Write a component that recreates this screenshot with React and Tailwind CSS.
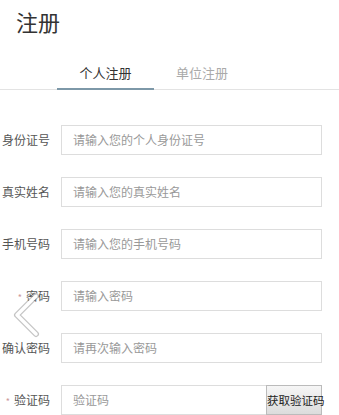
const fields = [
  { label: "身份证号", placeholder: "请输入您的个人身份证号" },
  { label: "真实姓名", placeholder: "请输入您的真实姓名" },
  { label: "手机号码", placeholder: "请输入您的手机号码" },
  { label: "密码", placeholder: "请输入密码", required: true },
  { label: "确认密码", placeholder: "请再次输入密码" },
  { label: "验证码", placeholder: "验证码", required: true, code: true },
];

export default function App() {
  return (
    <div
      className="relative w-[339px] h-[415px] overflow-hidden bg-white text-[#333]"
      style={{ fontFamily: '"Noto Sans CJK SC", "Noto Sans", sans-serif' }}
    >
      <h1 className="pl-[16px] pt-[6px] text-[22px] leading-[30px] font-normal">注册</h1>

      <div className="mt-[21px] flex border-b border-[#e3e3e3] h-[33px]">
        <div className="ml-[57px] w-[97px] flex justify-center border-b-2 border-[#7d98a8] -mb-px text-[13px] leading-[32px] text-[#333]">
          个人注册
        </div>
        <div className="ml-[22px] text-[13px] leading-[32px] text-[#aaa]">单位注册</div>
      </div>

      <div className="mt-[35px] flex flex-col gap-[22px]">
        {fields.map((f) => (
          <div key={f.label} className="flex items-center h-[30px]">
            <div className="w-[50px] text-right text-[12px] text-[#555] whitespace-nowrap">
              {f.required && <span className="text-[#c99] text-[9px] mr-[4px] align-middle">*</span>}
              {f.label}
            </div>
            <div className="ml-[11px] w-[261px] h-[30px] flex border border-[#ddd]">
              <div className="flex-1 pl-[11px] text-[12px] leading-[28px] text-[#999]">{f.placeholder}</div>
              {f.code && (
                <button className="w-[56px] -my-px -mr-px border border-[#bbb] bg-gradient-to-b from-[#f6f6f6] to-[#dcdcdc] text-[11.5px] text-[#222] leading-[28px] whitespace-nowrap">
                  获取验证码
                </button>
              )}
            </div>
          </div>
        ))}
      </div>

      <svg className="absolute left-[10px] top-[291px]" width="32" height="48" viewBox="0 0 32 48">
        <path d="M26 5 L7 24 L26 43" fill="none" stroke="#8a8a8a" strokeWidth="6" strokeLinecap="round" strokeLinejoin="round" opacity="0.5" />
        <path d="M26 5 L7 24 L26 43" fill="none" stroke="#fff" strokeWidth="3.5" strokeLinecap="round" strokeLinejoin="round" />
      </svg>
    </div>
  );
}
